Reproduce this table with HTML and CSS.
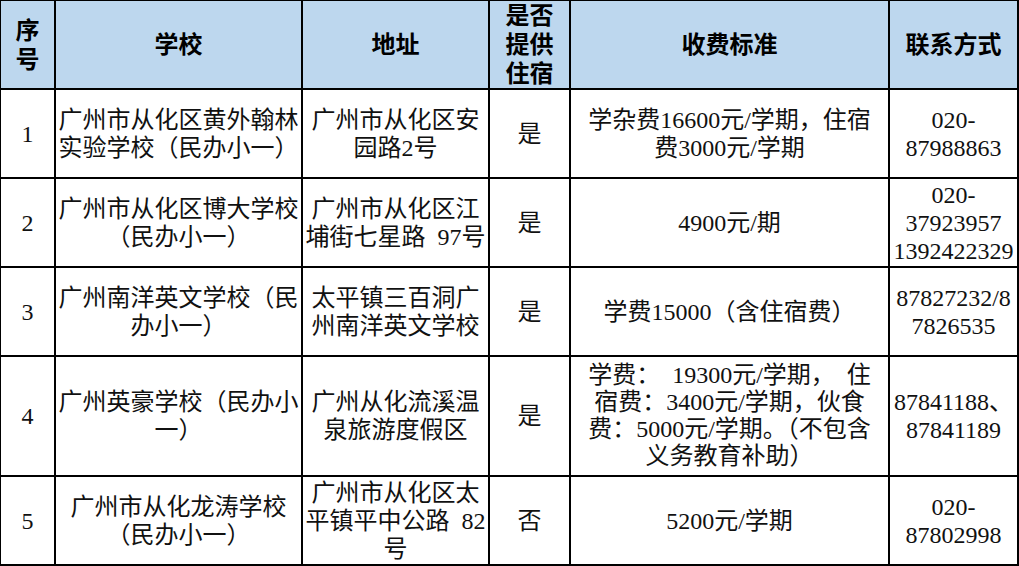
FILE: index.html
```html
<!DOCTYPE html>
<html lang="zh-CN">
<head>
<meta charset="utf-8">
<title>从化区民办学校</title>
<link rel="stylesheet" href="styles.css">
</head>
<body>
<table class="grid">
  <colgroup>
    <col class="c-no">
    <col class="c-school">
    <col class="c-addr">
    <col class="c-dorm">
    <col class="c-fee">
    <col class="c-tel">
  </colgroup>
  <thead>
    <tr class="head">
      <th>序<br>号</th>
      <th>学校</th>
      <th>地址</th>
      <th>是否<br>提供<br>住宿</th>
      <th>收费标准</th>
      <th>联系方式</th>
    </tr>
  </thead>
  <tbody>
    <tr class="row">
      <td>1</td>
      <td>广州市从化区黄外翰林<br>实验学校（民办小一）</td>
      <td>广州市从化区安<br>园路2号</td>
      <td>是</td>
      <td>学杂费16600元/学期，住宿<br>费3000元/学期</td>
      <td>020-<br>87988863</td>
    </tr>
    <tr class="row">
      <td>2</td>
      <td>广州市从化区博大学校<br>（民办小一）</td>
      <td>广州市从化区江<br>埔街七星路&ensp;97号</td>
      <td>是</td>
      <td>4900元/期</td>
      <td>020-<br>37923957<br>1392422329</td>
    </tr>
    <tr class="row">
      <td>3</td>
      <td>广州南洋英文学校（民<br>办小一）</td>
      <td>太平镇三百洞广<br>州南洋英文学校</td>
      <td>是</td>
      <td>学费15000（含住宿费）</td>
      <td>87827232/8<br>7826535</td>
    </tr>
    <tr class="row tall">
      <td>4</td>
      <td>广州英豪学校（民办小<br>一）</td>
      <td>广州从化流溪温<br>泉旅游度假区</td>
      <td>是</td>
      <td class="tight">学费：&ensp;19300元/学期，&ensp;住<br>宿费：3400元/学期，伙食<br>费：5000元/学期。（不包含<br>义务教育补助）</td>
      <td>87841188、<br>87841189</td>
    </tr>
    <tr class="row">
      <td>5</td>
      <td>广州市从化龙涛学校<br>（民办小一）</td>
      <td>广州市从化区太<br>平镇平中公路&ensp;82<br>号</td>
      <td>否</td>
      <td>5200元/学期</td>
      <td>020-<br>87802998</td>
    </tr>
  </tbody>
</table>
</body>
</html>
```

FILE: styles.css
```css
html, body {
  margin: 0;
  padding: 0;
  background: #ffffff;
}

body {
  width: 1019px;
  height: 566px;
  overflow: hidden;
}

.grid {
  border-collapse: collapse;
  table-layout: fixed;
  width: 1020px;
  margin: -1px 0 0 -1px;
  font-family: "Liberation Serif", "Noto Sans CJK SC", serif;
  font-size: 24px;
  line-height: 28px;
  color: #111111;
}

.c-no { width: 55px; }
.c-school { width: 247px; }
.c-addr { width: 187px; }
.c-dorm { width: 81px; }
.c-fee { width: 319px; }
.c-tel { width: 129px; }

.grid th,
.grid td {
  border: 2px solid #000000;
  padding: 0;
  text-align: center;
  vertical-align: middle;
  white-space: nowrap;
}

.head {
  height: 89px;
}

.head th {
  background: #bdd7ee;
  font-family: "Liberation Sans", "Noto Sans CJK SC", sans-serif;
  font-weight: 700;
  line-height: 29px;
  color: #000000;
}

.row {
  height: 89px;
}

.row.tall {
  height: 120px;
}

.tight {
  line-height: 27px;
}
```
